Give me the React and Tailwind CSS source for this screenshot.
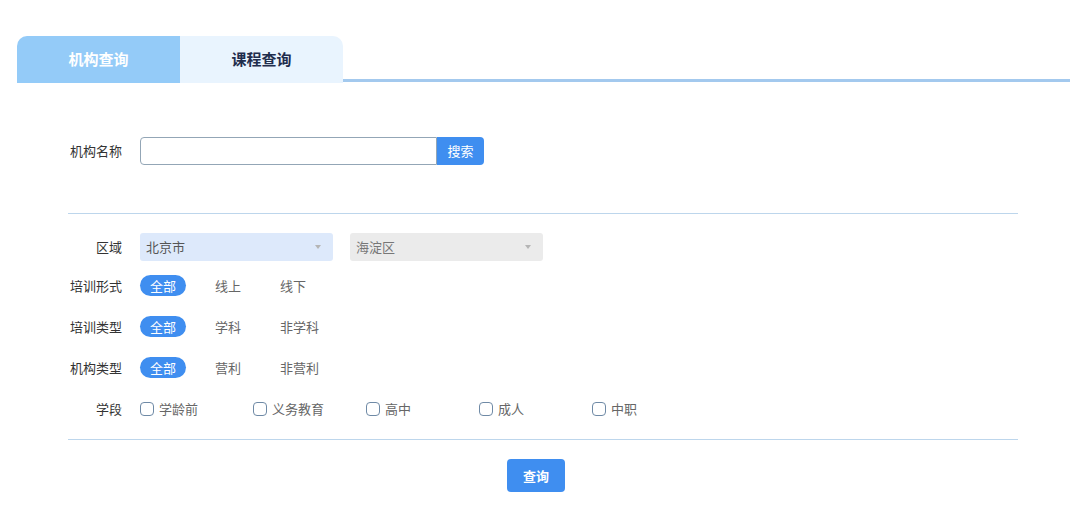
import React, { useState } from "react";

const FONT = { fontFamily: '"Noto Sans CJK SC", "Noto Sans", sans-serif' };

function Label({ children }) {
  return (
    <div className="w-[54px] shrink-0 text-right text-[13px] text-[#333]">
      {children}
    </div>
  );
}

function Select({ value, disabled }) {
  return (
    <div
      className={`flex h-[28px] w-[193px] items-center justify-between rounded-[3px] pl-[6px] pr-[12px] text-[13px] ${
        disabled ? "bg-[#ebebeb] text-[#777]" : "bg-[#dde9fb] text-[#555]"
      }`}
    >
      <span>{value}</span>
      <span className="h-0 w-0 border-x-[3.5px] border-t-[4px] border-x-transparent border-t-[#b5b5b5]" />
    </div>
  );
}

function OptionRow({ label, options }) {
  const [active, setActive] = useState(0);
  return (
    <div className="flex h-[21px] items-center gap-[18px]">
      <Label>{label}</Label>
      <div className="flex items-center gap-[19px]">
        {options.map((o, i) => (
          <button
            key={o}
            onClick={() => setActive(i)}
            className={`h-[21px] rounded-full px-[10px] text-[13px] leading-[21px] ${
              active === i ? "bg-[#3f8ef0] text-white" : "text-[#666]"
            }`}
          >
            {o}
          </button>
        ))}
      </div>
    </div>
  );
}

export default function App() {
  const [tab, setTab] = useState(0);
  const stages = ["学龄前", "义务教育", "高中", "成人", "中职"];

  return (
    <div className="h-[519px] w-[1080px] overflow-hidden bg-white" style={FONT}>
      {/* Tabs */}
      <div className="flex items-end pl-[17px] pr-[10px] pt-[36px]">
        <button
          onClick={() => setTab(0)}
          className="h-[47px] w-[163px] rounded-tl-[10px] bg-[#94cbf8] text-[15px] font-bold text-white"
        >
          机构查询
        </button>
        <button
          onClick={() => setTab(1)}
          className="h-[47px] w-[163px] rounded-tr-[10px] bg-[#e9f4fe] text-[15px] font-bold text-[#1f2d4d]"
        >
          课程查询
        </button>
        <div className="mb-px h-[3px] flex-1 bg-[#a3c9ee]" />
      </div>

      <div className="pl-[68px] pr-[62px]">
        {/* Name search */}
        <div className="mt-[54px] flex h-[28px] items-center gap-[18px]">
          <Label>机构名称</Label>
          <div className="flex h-[28px]">
            <input className="h-[28px] w-[297px] rounded-l-[4px] border border-[#93a6b6] px-2 text-[13px] outline-none" />
            <button className="h-[28px] w-[47px] rounded-r-[4px] bg-[#3f8ef0] text-[13px] text-white">
              搜索
            </button>
          </div>
        </div>

        <div className="mt-[48px] h-px bg-[#bdd6ec]" />

        {/* Region */}
        <div className="mt-[19px] flex h-[28px] items-center gap-[18px]">
          <Label>区域</Label>
          <div className="flex gap-[17px]">
            <Select value="北京市" />
            <Select value="海淀区" disabled />
          </div>
        </div>

        <div className="mt-[14px] flex flex-col gap-[20px]">
          <OptionRow label="培训形式" options={["全部", "线上", "线下"]} />
          <OptionRow label="培训类型" options={["全部", "学科", "非学科"]} />
          <OptionRow label="机构类型" options={["全部", "营利", "非营利"]} />
          <div className="flex h-[21px] items-center gap-[18px]">
            <Label>学段</Label>
            <div className="flex">
              {stages.map((s) => (
                <label key={s} className="flex w-[113px] items-center gap-[5px] text-[13px] text-[#666]">
                  <span className="h-[14px] w-[14px] rounded-[4px] border border-[#6f8aa6]" />
                  {s}
                </label>
              ))}
            </div>
          </div>
        </div>

        <div className="mt-[20px] h-px bg-[#bdd6ec]" />

        <div className="mt-[19px] flex justify-center">
          <button className="mr-[14px] h-[33px] w-[58px] rounded-[4px] bg-[#3f8ef0] text-[13px] font-bold text-white">
            查询
          </button>
        </div>
      </div>
    </div>
  );
}
